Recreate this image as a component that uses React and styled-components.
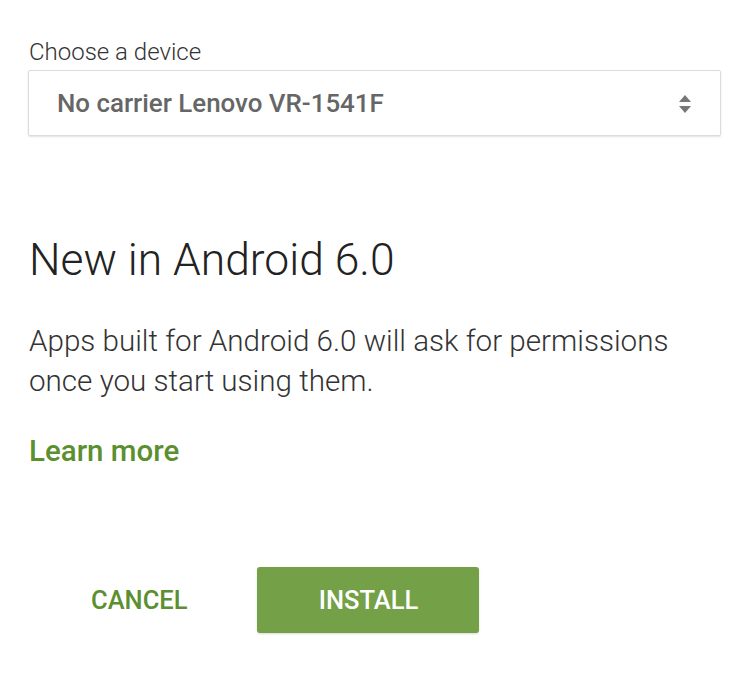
import React from 'react';
import styled, { createGlobalStyle } from 'styled-components';

const GlobalStyle = createGlobalStyle`
  body {
    margin: 0;
    background: #fff;
    font-family: Roboto, "Noto Sans", sans-serif;
  }
`;

const Page = styled.div`
  width: 737px;
  height: 677px;
  padding: 38px 16px 0 28px;
  box-sizing: border-box;
`;

const Label = styled.div`
  font-size: 24px;
  font-weight: 300;
  color: #333;
  line-height: 28px;
  margin-left: 1px;
`;

const SelectBox = styled.div`
  margin-top: 4px;
  height: 66px;
  box-sizing: border-box;
  border: 1px solid #dcdcdc;
  box-shadow: 0 1px 2px rgba(0, 0, 0, 0.12);
  border-radius: 2px;
  display: flex;
  align-items: center;
  justify-content: space-between;
  padding: 0 28px 0 28px;
`;

const SelectText = styled.span`
  font-size: 25.9px;
  font-weight: 500;
  color: #666;
`;

const Heading = styled.h2`
  margin: 100px 0 0 1px;
  font-size: 44.4px;
  font-weight: 300;
  color: #222;
  line-height: 48px;
`;

const Body = styled.p`
  margin: 37px 0 0 1px;
  font-size: 29.6px;
  font-weight: 300;
  color: #333;
  line-height: 40px;
`;

const LearnMore = styled.a`
  display: block;
  margin: 33px 0 0 1px;
  font-size: 29.5px;
  line-height: 35px;
  font-weight: 500;
  color: #5b8f2f;
  text-decoration: none;
`;

const Actions = styled.div`
  display: flex;
  align-items: center;
  margin-top: 98px;
  padding-left: 42px;
  gap: 49px;
`;

const Button = styled.button`
  font-family: Roboto, sans-serif;
  font-size: 25.5px;
  font-weight: 500;
  border: none;
  border-radius: 3px;
  height: 66px;
  cursor: pointer;
  background: ${(p) => (p.$primary ? '#74a047' : 'transparent')};
  color: ${(p) => (p.$primary ? '#fff' : '#5b8f2f')};
  width: ${(p) => (p.$primary ? '222px' : 'auto')};
  padding: ${(p) => (p.$primary ? '0' : '0 21px')};
  box-shadow: ${(p) => (p.$primary ? '0 1px 2px rgba(0,0,0,0.15)' : 'none')};
`;

const Arrows = () => (
  <svg width="14" height="22" viewBox="0 0 14 22">
    <path d="M7 3 L13 10 H1 Z" fill="#777" />
    <path d="M7 21 L13 14 H1 Z" fill="#777" />
  </svg>
);

export default function App() {
  return (
    <>
      <GlobalStyle />
      <Page>
        <Label>Choose a device</Label>
        <SelectBox>
          <SelectText>No carrier Lenovo VR-1541F</SelectText>
          <Arrows />
        </SelectBox>
        <Heading>New in Android 6.0</Heading>
        <Body>
          Apps built for Android 6.0 will ask for permissions
          <br />
          once you start using them.
        </Body>
        <LearnMore href="#">Learn more</LearnMore>
        <Actions>
          <Button>CANCEL</Button>
          <Button $primary>INSTALL</Button>
        </Actions>
      </Page>
    </>
  );
}
